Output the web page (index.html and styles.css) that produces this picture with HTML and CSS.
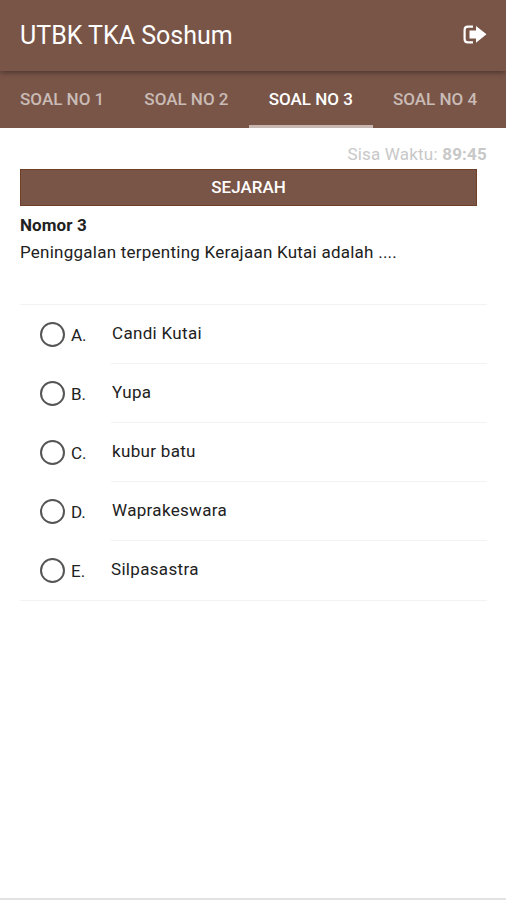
FILE: index.html
```html
<!DOCTYPE html>
<html lang="id">
<head>
    <meta charset="UTF-8">
    <meta name="viewport" content="width=device-width, initial-scale=1.0">
    <title>UTBK TKA Soshum</title>
    <link rel="stylesheet" href="styles.css">
</head>
<body>
    <div class="page">
        <header class="navbar">
            <h1 class="title">UTBK TKA Soshum</h1>
            <a href="#" class="logout" aria-label="Keluar">
                <svg width="24" height="20" viewBox="0 0 24 20">
                    <path d="M10 1.7H5Q1.6 1.7 1.6 5V14Q1.6 17.4 5 17.4H10" fill="none" stroke="#fff" stroke-width="2.2"/>
                    <path d="M6.5 5.4H13V1L23.5 9.3L13 17.8V13.4H6.5Z" fill="#fff"/>
                </svg>
            </a>
        </header>
        <nav class="tabs">
            <a href="#" class="tab">SOAL NO 1</a>
            <a href="#" class="tab">SOAL NO 2</a>
            <a href="#" class="tab active">SOAL NO 3</a>
            <a href="#" class="tab">SOAL NO 4</a>
        </nav>
        <main class="content">
            <p class="timer">Sisa Waktu: <b>89:45</b></p>
            <div class="subject">SEJARAH</div>
            <p class="number">Nomor 3</p>
            <p class="question">Peninggalan terpenting Kerajaan Kutai adalah ....</p>
            <ul class="options">
                <li class="option">
                    <span class="radio"></span><span class="letter">A.</span>
                    <span class="answer">Candi Kutai</span>
                </li>
                <li class="option">
                    <span class="radio"></span><span class="letter">B.</span>
                    <span class="answer">Yupa</span>
                </li>
                <li class="option">
                    <span class="radio"></span><span class="letter">C.</span>
                    <span class="answer">kubur batu</span>
                </li>
                <li class="option">
                    <span class="radio"></span><span class="letter">D.</span>
                    <span class="answer">Waprakeswara</span>
                </li>
                <li class="option">
                    <span class="radio"></span><span class="letter">E.</span>
                    <span class="answer">Silpasastra</span>
                </li>
            </ul>
        </main>
    </div>
</body>
</html>
```
FILE: styles.css
```css
* {
    box-sizing: border-box;
}
body {
    margin: 0;
    font-family: Roboto, sans-serif;
    background-color: #fff;
    color: #212121;
}
a {
    text-decoration: none;
}
.page {
    height: 900px;
    overflow: hidden;
    border-bottom: 2px solid #e2e2e2;
}
.navbar {
    position: relative;
    z-index: 1;
    display: flex;
    align-items: center;
    justify-content: space-between;
    height: 71px;
    padding: 0 19px 1px 20px;
    background-color: #795548;
    box-shadow: 0 1px 6px rgba(0, 0, 0, 0.45);
}
.title {
    margin: 0;
    font-size: 25px;
    font-weight: 400;
    color: #fff;
}
.logout {
    display: flex;
}
.tabs {
    display: flex;
    height: 57px;
    background-color: #795548;
}
.tab {
    flex: 0 0 124.3px;
    padding-top: 3px;
    line-height: 51px;
    text-align: center;
    font-size: 17px;
    font-weight: 500;
    color: #c9bbb5;
    border-bottom: 3px solid transparent;
}
.tab.active {
    color: #fff;
    border-bottom-color: #c8b7b1;
}
.content {
    padding: 14px 19px 0 20px;
}
.timer {
    margin: 0;
    line-height: 24px;
    text-align: right;
    font-size: 17px;
    letter-spacing: 0.2px;
    color: #c8c8c8;
}
.subject {
    width: 457px;
    height: 37px;
    margin-top: 3px;
    line-height: 34px;
    text-align: center;
    font-size: 17px;
    font-weight: 500;
    color: #fff;
    background-color: #795548;
    border: 1px solid #703f28;
}
.number {
    margin: 7px 0 0;
    line-height: 24px;
    font-size: 17px;
    font-weight: 700;
    letter-spacing: 0.1px;
}
.question {
    margin: 3px 0 0;
    line-height: 24px;
    font-size: 17px;
    letter-spacing: 0.24px;
}
.options {
    margin: 40px 0 0;
    padding: 0;
    list-style: none;
    border-top: 1px solid #f2f2f2;
    border-bottom: 1px solid #f2f2f2;
}
.option {
    display: flex;
    align-items: center;
    height: 59px;
    padding-left: 20px;
}
.radio {
    flex: none;
    width: 25px;
    height: 25px;
    border: 2px solid #555;
    border-radius: 50%;
}
.letter {
    width: 40px;
    margin-left: 6px;
    font-size: 17px;
}
.answer {
    flex: 1;
    height: 59px;
    padding-left: 1px;
    line-height: 56px;
    font-size: 17px;
    letter-spacing: 0.32px;
    border-bottom: 1px solid #f2f2f2;
}
.option:last-child .answer {
    padding-left: 0;
    border-bottom: none;
}
```
